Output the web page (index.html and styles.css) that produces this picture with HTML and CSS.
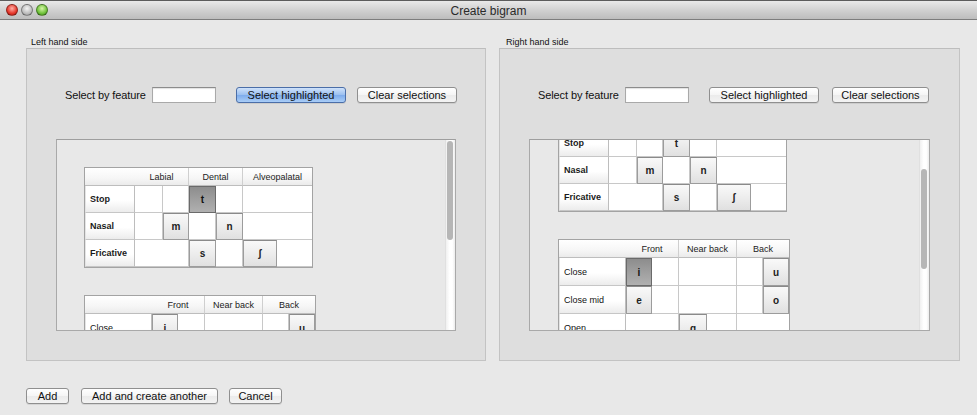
FILE: index.html
```html
<!DOCTYPE html>
<html>
<head>
<meta charset="utf-8">
<link rel="stylesheet" href="styles.css">
</head>
<body>
<div class="window">
  <div class="titlebar">
    <div class="lights">
      <span class="light red"></span>
      <span class="light gray"></span>
      <span class="light green"></span>
    </div>
    <div class="title">Create bigram</div>
    <div></div>
  </div>
  <div class="content">
    <div class="sides">
      <section class="side">
        <div class="side-label">Left hand side</div>
        <div class="panel">
          <div class="controls">
            <span class="ctl-label">Select by feature</span>
            <span class="field"></span>
            <button class="btn btn-primary btn-sel">Select highlighted</button>
            <button class="btn btn-clear">Clear selections</button>
          </div>
          <div class="pane">
            <div class="viewport">
              <div class="scroll-content">
                <div class="grid cons">
                  <div class="hd corner"></div>
                  <div class="hd span2">Labial</div>
                  <div class="hd span2">Dental</div>
                  <div class="hd span2 last">Alveopalatal</div>

                  <div class="rh">Stop</div>
                  <div class="c"></div><div class="c"></div>
                  <div class="c b sel">t</div><div class="c"></div>
                  <div class="c span2 last"></div>

                  <div class="rh">Nasal</div>
                  <div class="c"></div><div class="c b">m</div>
                  <div class="c"></div><div class="c b">n</div>
                  <div class="c span2 last"></div>

                  <div class="rh">Fricative</div>
                  <div class="c span2"></div>
                  <div class="c b">s</div><div class="c"></div>
                  <div class="c b">ʃ</div><div class="c last"></div>
                </div>

                <div class="grid vow">
                  <div class="hd corner"></div>
                  <div class="hd span2">Front</div>
                  <div class="hd span2">Near back</div>
                  <div class="hd span2 last">Back</div>

                  <div class="rh rh-v">Close</div>
                  <div class="c b">i</div><div class="c"></div>
                  <div class="c span2"></div>
                  <div class="c"></div><div class="c b last">u</div>

                  <div class="rh rh-v">Close mid</div>
                  <div class="c b">e</div><div class="c"></div>
                  <div class="c span2"></div>
                  <div class="c"></div><div class="c b last">o</div>

                  <div class="rh rh-v">Open</div>
                  <div class="c span2"></div>
                  <div class="c b">ɑ</div><div class="c"></div>
                  <div class="c span2 last"></div>
                </div>
              </div>
            </div>
            <div class="track"><div class="thumb thumb-left"></div></div>
          </div>
        </div>
      </section>

      <section class="side">
        <div class="side-label side-label-r">Right hand side</div>
        <div class="panel panel-r">
          <div class="controls">
            <span class="ctl-label">Select by feature</span>
            <span class="field"></span>
            <button class="btn btn-sel">Select highlighted</button>
            <button class="btn btn-clear btn-clear-r">Clear selections</button>
          </div>
          <div class="pane pane-r">
            <div class="viewport">
              <div class="scroll-content scrolled">
                <div class="grid cons">
                  <div class="hd corner"></div>
                  <div class="hd span2">Labial</div>
                  <div class="hd span2">Dental</div>
                  <div class="hd span2 last">Alveopalatal</div>

                  <div class="rh">Stop</div>
                  <div class="c"></div><div class="c"></div>
                  <div class="c b">t</div><div class="c"></div>
                  <div class="c span2 last"></div>

                  <div class="rh">Nasal</div>
                  <div class="c"></div><div class="c b">m</div>
                  <div class="c"></div><div class="c b">n</div>
                  <div class="c span2 last"></div>

                  <div class="rh">Fricative</div>
                  <div class="c span2"></div>
                  <div class="c b">s</div><div class="c"></div>
                  <div class="c b">ʃ</div><div class="c last"></div>
                </div>

                <div class="grid vow">
                  <div class="hd corner"></div>
                  <div class="hd span2">Front</div>
                  <div class="hd span2">Near back</div>
                  <div class="hd span2 last">Back</div>

                  <div class="rh rh-v">Close</div>
                  <div class="c b sel">i</div><div class="c"></div>
                  <div class="c span2"></div>
                  <div class="c"></div><div class="c b last">u</div>

                  <div class="rh rh-v">Close mid</div>
                  <div class="c b">e</div><div class="c"></div>
                  <div class="c span2"></div>
                  <div class="c"></div><div class="c b last">o</div>

                  <div class="rh rh-v">Open</div>
                  <div class="c span2"></div>
                  <div class="c b">ɑ</div><div class="c"></div>
                  <div class="c span2 last"></div>
                </div>
              </div>
            </div>
            <div class="track"><div class="thumb thumb-right"></div></div>
          </div>
        </div>
      </section>
    </div>

    <div class="footer">
      <button class="btn btn-add">Add</button>
      <button class="btn btn-another">Add and create another</button>
      <button class="btn btn-cancel">Cancel</button>
    </div>
  </div>
</div>
</body>
</html>
```

FILE: styles.css
```css
* { box-sizing: border-box; }

html, body {
  margin: 0;
  padding: 0;
  background: #e8e8e8;
  font-family: "Liberation Sans", Arial, sans-serif;
  color: #111;
}

.window {
  width: 977px;
  height: 415px;
  background: #e8e8e8;
  overflow: hidden;
}

.titlebar {
  height: 20px;
  display: grid;
  grid-template-columns: 1fr auto 1fr;
  align-items: center;
  background: linear-gradient(#e9e9e9, #cfcfcf 55%, #bdbdbd);
  border-top: 1px solid #5c5c5c;
  border-bottom: 1px solid #7d7d7d;
}

.lights {
  display: flex;
  gap: 3px;
  padding-left: 6px;
  align-items: center;
}

.light {
  width: 12px;
  height: 12px;
  border-radius: 50%;
  border: 1px solid rgba(0,0,0,0.35);
}
.light.red { background: radial-gradient(circle at 50% 35%, #ffb0a8, #e5362a 60%, #a31a12); }
.light.gray { background: radial-gradient(circle at 50% 35%, #f4f4f4, #bdbdbd 60%, #8f8f8f); }
.light.green { background: radial-gradient(circle at 50% 35%, #d7f5a7, #6fc23a 60%, #3e7f1a); }

.title {
  font-size: 12px;
  color: #2a2a2a;
  padding-top: 1px;
}

.content {
  padding: 17px 0 0 26px;
}

.sides {
  display: flex;
  gap: 13px;
}

.side-label {
  font-size: 9px;
  height: 11px;
  line-height: 10px;
  padding-left: 5px;
  color: #111;
}
.side-label-r { padding-left: 7px; }

.panel {
  width: 460px;
  height: 313px;
  background: #dedede;
  border: 1px solid #c3c3c3;
  border-top-color: #bdbdbd;
  padding-top: 38px;
}
.panel-r { width: 461px; }

.controls {
  display: flex;
  align-items: center;
  height: 16px;
  padding-left: 38px;
}

.ctl-label {
  font-size: 11px;
  white-space: nowrap;
  width: 80px;
  margin-right: 7px;
  letter-spacing: -0.1px;
}

.field {
  flex: none;
  width: 64px;
  height: 16px;
  background: #fff;
  border: 1px solid #a9a9a9;
  border-top-color: #8c8c8c;
  box-shadow: inset 0 1px 1px rgba(0,0,0,0.12);
}

.btn {
  flex: none;
  font-family: "Liberation Sans", Arial, sans-serif;
  font-size: 11px;
  white-space: nowrap;
  height: 16px;
  padding: 0;
  line-height: 14px;
  color: #111;
  border: 1px solid #8f8f8f;
  border-radius: 3px;
  background: linear-gradient(#ffffff, #f5f5f5 50%, #ebebeb 51%, #f3f3f3);
  box-shadow: 0 1px 0 rgba(0,0,0,0.08);
}

.btn-primary {
  border-color: #4b6ea8;
  background: linear-gradient(#cfe2fa, #9cc0f0 48%, #7eacec 52%, #a9cdf7);
}

.btn-sel { width: 110px; margin-left: 20px; }
.btn-clear { width: 100px; margin-left: 11px; }
.btn-clear-r { width: 97px; margin-left: 13px; }

.pane {
  width: 400px;
  height: 192px;
  margin: 36px 0 0 29px;
  border: 1px solid #a9a9a9;
  border-top-color: #9e9e9e;
  background: #e8e8e8;
  display: flex;
}
.pane-r { width: 401px; }

.viewport {
  flex: 1;
  overflow: hidden;
  background: #e8e8e8;
}

.scroll-content {
  padding: 27px 0 0 27px;
  display: flex;
  flex-direction: column;
  align-items: flex-start;
  gap: 27px;
}
.scrolled {
  margin-top: -56px;
  padding-left: 28px;
}

.track {
  width: 10px;
  background: linear-gradient(90deg, #f0f0f0, #ffffff 40%, #ffffff 70%, #ececec);
  border-left: 1px solid #e0e0e0;
  padding: 1px 0 0 1px;
}

.thumb {
  width: 6px;
  border-radius: 3px;
  background: #b6b6b6;
}
.thumb-left { height: 99px; }
.thumb-right { height: 100px; margin-top: 28px; }

/* tables */
.grid {
  display: grid;
  border: 1px solid #a3a3a3;
  background: #fff;
}

.cons {
  grid-template-columns: 50px 28px 26px 27px 27px 34px 35px;
  grid-template-rows: 18px 27px 27px 27px;
}

.vow {
  grid-template-columns: 67px 26px 27px 28px 30px 26px 26px;
  grid-template-rows: 18px 28px 28px 28px;
}

.span2 { grid-column: span 2; }

.hd {
  font-size: 9px;
  white-space: nowrap;
  display: flex;
  align-items: center;
  justify-content: center;
  background: linear-gradient(#ffffff, #f6f6f6 60%, #ebebeb);
  border-right: 1px solid #cfcfcf;
  border-bottom: 1px solid #bdbdbd;
  color: #222;
}
.hd.corner { border-right: none; }
.hd.last { border-right: none; }

.rh {
  font-size: 9px;
  font-weight: bold;
  white-space: nowrap;
  display: flex;
  align-items: center;
  padding-left: 4px;
  background: linear-gradient(#ffffff, #ffffff 55%, #ececec);
  border-right: 1px solid #bdbdbd;
  border-bottom: 1px solid #c6c6c6;
  border-left: 1px solid #e4e4e4;
  color: #1a1a1a;
}
.rh-v { font-weight: normal; color: #111; }

.c {
  background: #fff;
  border-right: 1px solid #c8c8c8;
  border-bottom: 1px solid #c8c8c8;
  display: flex;
  align-items: center;
  justify-content: center;
  font-size: 10px;
  font-weight: bold;
  color: #222;
}
.c.last { border-right: none; }

.c.b {
  background: linear-gradient(#f9f9f9, #ededed 50%, #e0e0e0);
  border: 1px solid #9c9c9c;
  border-top-color: #8a8a8a;
}
.c.b.sel {
  background: linear-gradient(#8d8d8d, #9f9f9f 50%, #b0b0b0);
  border-color: #6a6a6a;
  color: #111;
}

.footer {
  display: flex;
  gap: 12px;
  margin-top: 27px;
}
.btn-add { width: 43px; }
.btn-another { width: 137px; }
.btn-cancel { width: 53px; margin-left: -1px; }
```
